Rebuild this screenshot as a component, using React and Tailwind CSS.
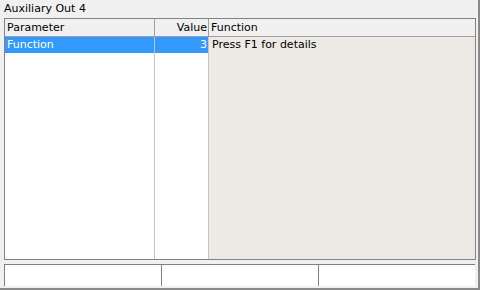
export default function App() {
  return (
    <div
      className="w-[480px] h-[290px] bg-[#f0f0f0] border-r-2 border-b-2 border-[#8a8a8a] flex flex-col text-[11px] text-black"
      style={{ fontFamily: '"DejaVu Sans", Tahoma, sans-serif' }}
    >
      <div className="h-[18px] pl-[4px] pt-[2px] leading-[14px]">Auxiliary Out 4</div>

      {/* list view */}
      <div className="ml-[4px] w-[472px] h-[242px] border border-[#828282] bg-white flex flex-col">
        <div className="h-[18px] flex border-b border-[#a0a0a0] bg-[#f0f0f0] leading-[17px]">
          <div className="w-[150px] pl-[2px] border-r border-[#a0a0a0]">Parameter</div>
          <div className="w-[54px] pr-[1px] text-right border-r border-[#a0a0a0]">Value</div>
          <div className="flex-1 pl-[2px]">Function</div>
        </div>
        <div className="flex-1 flex">
          <div className="w-[150px] border-r border-[#c4c4c4]">
            <div className="h-[16px] bg-[#3399ff] text-white pl-[2px] leading-[16px]">Function</div>
          </div>
          <div className="w-[54px] border-r border-[#c4c4c4]">
            <div className="h-[16px] bg-[#3399ff] text-white pr-[1px] text-right leading-[16px]">3</div>
          </div>
          <div className="flex-1 bg-[#ede9e5] pl-[3px] leading-[16px]">Press F1 for details</div>
        </div>
      </div>

      {/* status bar */}
      <div className="mt-[4px] ml-[4px] w-[471px] h-[22px] flex">
        <div className="w-[157px] bg-white border-t border-l border-[#808080]"></div>
        <div className="w-[157px] bg-white border-t border-l border-[#808080]"></div>
        <div className="flex-1 bg-white border-t border-l border-[#808080]"></div>
      </div>
    </div>
  );
}
